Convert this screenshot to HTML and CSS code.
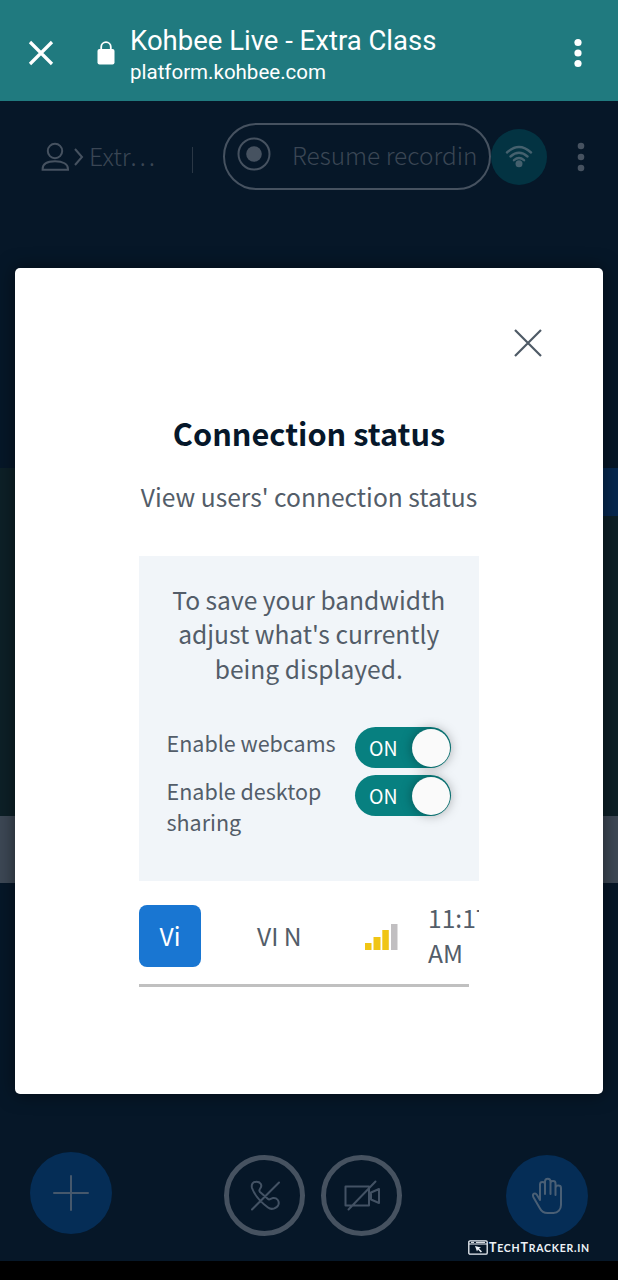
FILE: index.html
```html
<!DOCTYPE html>
<html lang="en">
<head>
<meta charset="utf-8">
<title>Kohbee Live - Extra Class</title>
<link rel="stylesheet" href="styles.css">
</head>
<body>
<div class="screen">
  <header class="browser-bar">
    <svg class="bar-close" width="26" height="26" viewBox="0 0 26 26"><path d="M2 2 24 24M24 2 2 24"/></svg>
    <svg class="bar-lock" width="18" height="24" viewBox="0 0 18 24"><path d="M4.200 9V6a4.800 4.800 0 0 1 9.600 0v3" fill="none" stroke="#fff" stroke-width="1.800"/><rect x="0.500" y="8" width="17" height="15.500" rx="2" fill="#fff"/></svg>
    <div class="page-id">
      <div class="page-title"><span>Kohbee Live - Extra Class</span></div>
      <div class="page-host"><span>platform.kohbee.com</span></div>
    </div>
    <svg class="bar-menu" width="8" height="30" viewBox="0 0 8 30"><circle cx="4" cy="4.500" r="3.600"/><circle cx="4" cy="15" r="3.600"/><circle cx="4" cy="25.500" r="3.600"/></svg>
  </header>

  <main class="app">
    <nav class="app-nav">
      <svg class="user" width="28" height="30" viewBox="0 0 28 30"><circle cx="14" cy="9" r="7.200"/><path d="M1.600 27.800V27C1.600 22.300 6 19.300 14 19.300S27 22.300 27 27v.8Z"/></svg>
      <svg class="chevron" width="10" height="18" viewBox="0 0 10 18"><path d="M1 1 8 9 1 17"/></svg>
      <span class="room">Extr…</span>
      <span class="divider"></span>
      <button class="record">
        <svg width="34" height="34" viewBox="0 0 34 34"><circle cx="17" cy="17" r="15.500"/><circle class="dot" cx="17" cy="17" r="7.800"/></svg>
        <span>Resume recordin</span>
      </button>
      <span class="network">
        <svg width="28" height="24" viewBox="0 0 28 24"><path d="M2 7.500Q14-3.500 26 7.500M5.500 11.500Q14 4 22.500 11.500M9 15.200Q14 11 19 15.200"/><circle cx="14" cy="18.800" r="3.500"/></svg>
      </span>
      <svg class="nav-menu" width="8" height="30" viewBox="0 0 8 30"><circle cx="4" cy="4" r="3.300"/><circle cx="4" cy="15" r="3.300"/><circle cx="4" cy="26" r="3.300"/></svg>
    </nav>

    <div class="stage"><span class="stage-chip"></span></div>
    <div class="stage-toolbar"></div>

    <footer class="actions">
      <span class="action filled plus"><svg width="36" height="36" viewBox="0 0 36 36"><path d="M18 1v34M1 18h34"/></svg></span>
      <span class="action ring phone"><svg width="32" height="32" viewBox="0 0 32 32"><path d="M3 8C2 4 4 1.800 7.500 1.800c3.800 0 6 3.200 4 6.200-1 1.500-2 2.500-.5 4l8 7c1.500 1.500 2.500-.5 5-1 4-.5 6.500 3 5.500 6.500-1.500 4.500-7.500 5.500-10.500 3C13 23 6 16 3 8ZM3 29.500 30 2.500"/></svg></span>
      <span class="action ring camera"><svg width="38" height="32" viewBox="0 0 38 32"><path d="M2.500 6.500h23.500v19H2.500ZM28 12.500l8-3.500v14l-8-3.500ZM5.500 29.500 32.500 1.500"/></svg></span>
      <span class="action filled hand"><svg width="32" height="38" viewBox="0 0 32 38"><path d="M9 23V7.500c0-3.300 5-3.300 5 0V17 4.500c0-3.800 5.500-3.800 5.500 0V17 6.500c0-3.300 5-3.300 5 0V18v-7c0-3.300 5.500-3.300 5.500 0v17c0 4.500-3 8-7.500 8h-6c-3.500 0-6-1.500-7.500-4.500L2.300 20c-1.300-3.300 2-4.800 3.700-2l3 5"/></svg></span>
    </footer>
  </main>
  <div class="system-bar"></div>

  <div class="watermark">
    <svg width="20" height="15" viewBox="0 0 20 15"><rect x="0.800" y="0.800" width="18.400" height="13.400" rx="1.200" fill="none" stroke="#edf2f7" stroke-width="1.300"/><path d="M1 4h18" stroke="#edf2f7"/><path d="M3 2.400h3M8 2.400h9" stroke="#edf2f7"/><path d="m7 6 6 1.500-2 1 3 3-1.200 1-2.800-3-1 2Z" fill="#edf2f7"/></svg>
    <span class="brand">T<small>ECH</small>T<small>RACKER.IN</small></span>
  </div>

  <section class="modal">
    <div class="modal-top"><svg width="28" height="28" viewBox="0 0 28 28"><path d="M1 1 27 27M27 1 1 27"/></svg></div>
    <h1>Connection status</h1>
    <p class="subtitle">View users' connection status</p>
    <div class="saver">
      <p class="saver-text">To save your bandwidth<br>adjust what's currently<br>being displayed.</p>
      <div class="setting"><span class="label">Enable webcams</span><span class="toggle"><span>ON</span><i></i></span></div>
      <div class="setting"><span class="label">Enable desktop<br>sharing</span><span class="toggle"><span>ON</span><i></i></span></div>
    </div>
    <div class="user-row">
      <span class="avatar">Vi</span>
      <span class="name">VI N</span>
      <svg class="signal" width="34" height="26" viewBox="0 0 34 26"><g fill="#f0c514"><path d="M1 19h6.500v7H1ZM9.500 13h7v13h-7ZM18.300 6h6.500v20h-6.500Z"/></g><path fill="#c1bfc1" d="M27 0h6.500v26H27Z"/></svg>
      <span class="time">11:17<br>AM</span>
    </div>
    <div class="rule"></div>
  </section>
</div>
</body>
</html>
```

FILE: styles.css
```css
* { box-sizing: border-box; }
body, h1, p { margin: 0; }
body { background: #000; }
svg { display: block; flex: none; overflow: visible; }

.screen {
  position: relative;
  width: 618px;
  height: 1280px;
  overflow: hidden;
  display: flex;
  flex-direction: column;
  font-family: "Noto Sans CJK SC", "Noto Sans", sans-serif;
}

.browser-bar {
  height: 101px;
  flex: none;
  display: flex;
  align-items: center;
  padding: 5px 36px 0 28px;
  background: #207a7f;
  color: #fff;
  font-family: Roboto, sans-serif;
}
.bar-close { stroke: #fff; stroke-width: 3.2; }
.bar-lock { margin-left: 43px; }
.page-id { margin-left: 15px; padding-top: 6px; flex: 1; white-space: nowrap; }
.page-title { font-size: 27.5px; line-height: 34px; margin-top: -3px; }
.page-host { font-size: 20.5px; line-height: 28px; }
.bar-menu { fill: #fff; }

.app {
  height: 1160px;
  flex: none;
  display: flex;
  flex-direction: column;
  background: #061728;
}
.app-nav {
  height: 111px;
  flex: none;
  display: flex;
  align-items: center;
  padding: 0 0 0 41px;
  font-weight: 300;
  color: #3a4654;
}
.user, .chevron { fill: none; stroke: #465260; stroke-width: 2; }
.chevron { margin-left: 5px; }
.room { width: 67px; margin: -4px 0 0 5px; flex: none; font-size: 24.6px; line-height: 34px; white-space: nowrap; }
.divider { width: 1px; height: 26px; margin: 7px 0 0 36px; flex: none; background: #2a3745; }
.record {
  width: 268px;
  height: 67px;
  margin-left: 30px;
  padding: 0 0 0 12px;
  flex: none;
  display: flex;
  align-items: center;
  border: 2px solid #465260;
  border-radius: 34px;
  background: none;
  color: #3a4654;
  font: inherit;
  font-size: 24.4px;
  white-space: nowrap;
}
.record svg { fill: none; stroke: #465260; stroke-width: 2; margin-top: -5px; }
.record .dot { fill: #465260; stroke: none; }
.record span { margin: -4px 0 0 21px; line-height: 34px; }
.network {
  width: 56px;
  height: 56px;
  flex: none;
  display: flex;
  align-items: center;
  justify-content: center;
  border-radius: 50%;
  background: #033342;
}
.network svg { fill: none; stroke: #45616e; stroke-width: 2.4; stroke-linecap: round; }
.network circle { fill: #45616e; stroke: none; }
.nav-menu { margin-left: 30px; fill: #465260; }

.stage {
  height: 348px;
  margin-top: 256px;
  flex: none;
  display: flex;
  justify-content: flex-end;
  background: #0d2027;
}
.stage-chip { width: 60px; height: 48px; background: #062850; }
.stage-toolbar { height: 67px; flex: none; background: #3d4855; }

.actions {
  display: flex;
  align-items: flex-start;
  margin-top: 269px;
  padding-left: 30px;
}
.action {
  width: 82px;
  height: 82px;
  flex: none;
  display: flex;
  align-items: center;
  justify-content: center;
  border-radius: 50%;
}
.action svg { fill: none; stroke: #435264; stroke-width: 2; stroke-linecap: round; stroke-linejoin: round; }
.filled { background: #052d56; }
.ring { border: 5px solid #465260; width: 81px; height: 81px; }
.action.plus svg { stroke: #46586c; }
.phone { margin: 3px 0 0 112px; }
.camera { margin: 3px 0 0 16px; }
.hand { margin: 3px 0 0 104px; }
.action.hand svg { stroke: #4a5f75; }
.system-bar { flex: 1; background: #000; }

.watermark {
  position: absolute;
  left: 468px;
  top: 1238px;
  display: flex;
  align-items: center;
  gap: 1px;
}
.brand {
  font: bold 12.5px/16px Lato, sans-serif;
  color: #edf2f7;
  white-space: nowrap;
  letter-spacing: 0.75px;
  padding-top: 2px;
}
.brand small { font-size: 10.5px; }

.modal {
  position: absolute;
  left: 15px;
  top: 268px;
  width: 588px;
  height: 826px;
  padding: 61px 124px 0;
  border-radius: 5px;
  background: #fff;
  color: #535d69;
  box-shadow: 0 0 18px rgba(0, 0, 0, 0.5);
}
.modal-top { display: flex; justify-content: flex-end; margin-right: -63px; }
.modal-top svg { stroke: #4e5a66; stroke-width: 2.2; }
h1 {
  margin-top: 55px;
  font-size: 30.7px;
  line-height: 42px;
  text-align: center;
  color: #06172a;
  white-space: nowrap;
}
.subtitle { margin-top: 25px; font-size: 24.6px; line-height: 34px; text-align: center; white-space: nowrap; }
.saver { height: 325px; margin-top: 43px; padding: 26px 28px 0 27.5px; background: #f1f5f9; }
.saver-text { margin: 0 -20px 41px; font-size: 24.6px; line-height: 34.4px; text-align: center; }
.setting { display: flex; justify-content: space-between; height: 48px; white-space: nowrap; }
.label { font-size: 21.5px; line-height: 31px; padding-top: 1px; }
.toggle {
  width: 96px;
  height: 41px;
  margin-top: 1px;
  padding: 0 1px 0 14px;
  flex: none;
  display: flex;
  align-items: center;
  justify-content: space-between;
  border-radius: 21px;
  background: #078080;
  color: #fff;
  font-size: 19.5px;
  line-height: 28px;
}
.toggle i { width: 38px; height: 38px; border-radius: 50%; background: #fafafa; box-shadow: 0 0 12px rgba(0, 0, 0, 0.35); }

.user-row { display: flex; align-items: center; margin-top: 20px; height: 70px; overflow: hidden; font-size: 24.6px; line-height: 34.4px; white-space: nowrap; }
.avatar {
  width: 62px;
  height: 62px;
  flex: none;
  border-radius: 8px;
  background: #1976d2;
  color: #fff;
  text-align: center;
  line-height: 60px;
}
.name { width: 107px; margin: -2px 0 0 56px; flex: none; }
.signal { margin-top: 1px; }
.time { margin: -3px 0 0 30px; }
.rule { width: 330px; height: 3px; margin-top: 13px; background: #c0c0c0; }
```
